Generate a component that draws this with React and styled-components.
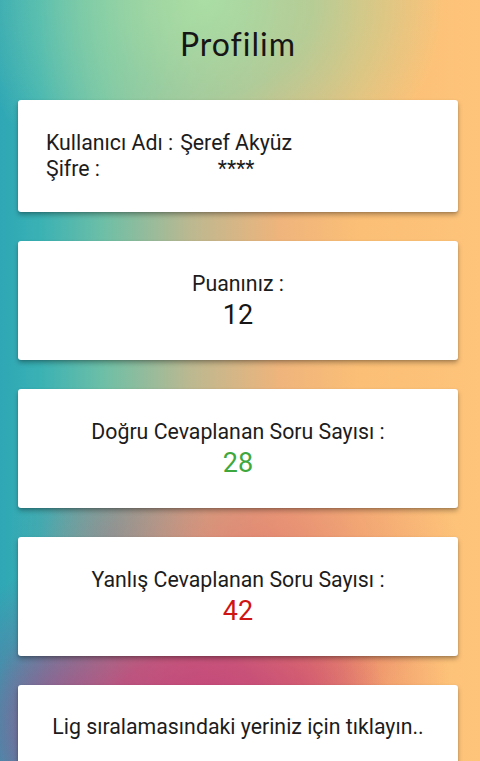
import React from "react";
import styled, { createGlobalStyle } from "styled-components";

const GlobalStyle = createGlobalStyle`
  * { box-sizing: border-box; }
  html, body { margin: 0; padding: 0; }
  body {
    font-family: Roboto, "Noto Sans", "Liberation Sans", sans-serif;
    color: #1c1c1c;
    overflow: hidden;
  }
`;

const Page = styled.div`
  width: 480px;
  min-height: 100vh;
  padding: 0 22px 40px 18px;
  background:
    radial-gradient(ellipse 200px 150px at 190px 715px, rgba(194, 66, 122, 1) 0%, rgba(196, 72, 122, 0.85) 40%, rgba(200, 80, 120, 0) 100%),
    radial-gradient(ellipse 120px 170px at 60px 735px, rgba(122, 90, 152, 0.9) 0%, rgba(122, 90, 152, 0) 100%),
    radial-gradient(ellipse 150px 120px at 300px 680px, rgba(226, 110, 100, 0.9) 0%, rgba(226, 110, 100, 0) 100%),
    radial-gradient(ellipse 210px 170px at 250px 560px, rgba(226, 124, 112, 0.85) 0%, rgba(226, 124, 112, 0) 100%),
    radial-gradient(ellipse 100px 120px at 110px 540px, rgba(112, 128, 154, 0.6) 0%, rgba(112, 128, 154, 0) 100%),
    radial-gradient(ellipse 240px 210px at 205px 0px, rgba(168, 224, 165, 0.95) 0%, rgba(150, 215, 165, 0.65) 45%, rgba(150, 215, 165, 0) 100%),
    linear-gradient(90deg, #2fa7b5 0%, #39b1b4 8%, #6fbfa6 22%, #bdb890 40%, #eeb47c 58%, #fbbf76 75%, #fec47a 100%);
`;

const Title = styled.h1`
  margin: 0;
  height: 100px;
  padding-top: 24px;
  text-align: center;
  font-family: Lato, "Open Sans", sans-serif;
  font-weight: 400;
  font-size: 32px;
  line-height: 40px;
  letter-spacing: 1px;
  color: #161616;
`;

const List = styled.div`
  display: flex;
  flex-direction: column;
  gap: 29px;
`;

const Card = styled.div`
  width: 440px;
  height: ${(p) => p.$h}px;
  background: #ffffff;
  border-radius: 3px;
  box-shadow: 0 3px 5px rgba(0, 0, 0, 0.28), 0 1px 2px rgba(0, 0, 0, 0.12);
  display: flex;
  flex-direction: column;
  align-items: ${(p) => (p.$left ? "flex-start" : "center")};
  justify-content: ${(p) => (p.$top ? "flex-start" : "center")};
  padding: ${(p) => (p.$top ? "29px 0 0" : "0")} ${(p) => (p.$left ? "28px" : "0")};
`;

const InfoGrid = styled.div`
  display: grid;
  grid-template-columns: auto auto;
  column-gap: 7px;
  font-size: 21.3px;
  line-height: 26px;
`;

const Value = styled.span`
  text-align: center;
`;

const Label = styled.div`
  font-size: 21.3px;
  line-height: 25px;
  margin-bottom: 4px;
`;

const Number = styled.div`
  font-size: 27px;
  line-height: 31px;
  color: ${(p) => p.$color || "#161616"};
`;

export default function App() {
  return (
    <>
      <GlobalStyle />
      <Page>
        <Title>Profilim</Title>
        <List>
          <Card $h={112} $left>
            <InfoGrid>
              <span>Kullanıcı Adı :</span>
              <Value>Şeref Akyüz</Value>
              <span>Şifre :</span>
              <Value>****</Value>
            </InfoGrid>
          </Card>
          <Card $h={119}>
            <Label>Puanınız :</Label>
            <Number>12</Number>
          </Card>
          <Card $h={119}>
            <Label>Doğru Cevaplanan Soru Sayısı :</Label>
            <Number $color="#3ea83e">28</Number>
          </Card>
          <Card $h={119}>
            <Label>Yanlış Cevaplanan Soru Sayısı :</Label>
            <Number $color="#d01414">42</Number>
          </Card>
          <Card $h={119} $top>
            <Label>Lig sıralamasındaki yeriniz için tıklayın..</Label>
          </Card>
        </List>
      </Page>
    </>
  );
}
